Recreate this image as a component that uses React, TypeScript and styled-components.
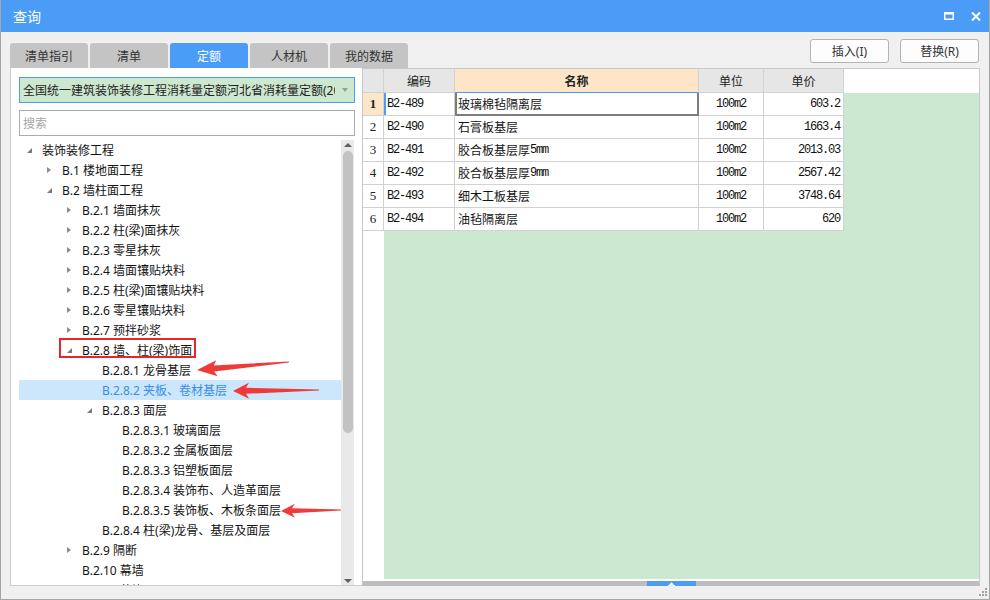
import React from "react";
import styled, { createGlobalStyle, css } from "styled-components";

const BLUE = "#4a9cf7";
const GREEN = "#cde8d0";
const PEACH = "#fde6c8";
const LINE = "#d2d2d2";
const CJK = `"Noto Sans", "Noto Sans CJK SC", sans-serif`;
const MONO = `"Liberation Mono", "Noto Sans CJK SC", monospace`;

const GlobalStyle = createGlobalStyle`
  html, body { margin: 0; padding: 0; background: #fff; }
  body { font-family: ${CJK}; font-size: 12px; color: #222; }
  * { box-sizing: border-box; }
`;

const Window = styled.div`
  position: relative;
  width: 990px;
  height: 600px;
  display: flex;
  flex-direction: column;
  background: #f0f0f0;
  border: 1px solid #a6a6a6;
  border-top: none;
  overflow: hidden;
`;

const TitleBar = styled.div`
  height: 32px;
  flex: none;
  display: flex;
  align-items: center;
  justify-content: space-between;
  padding: 0 8px 0 12px;
  background: ${BLUE};
  color: #fff;
  font-size: 14px;
`;

const TitleTools = styled.div`
  display: flex;
  align-items: center;
  gap: 17px;
`;

const Body = styled.div`
  flex: 1;
  display: flex;
  flex-direction: column;
  padding: 0 9px;
  min-height: 0;
`;

const TopRow = styled.div`
  height: 36px;
  flex: none;
  display: flex;
  justify-content: space-between;
`;

const Tabs = styled.div`
  display: flex;
  gap: 2px;
  align-self: flex-end;
`;

const Tab = styled.div<{ $active?: boolean }>`
  width: 78px;
  height: 25px;
  display: flex;
  align-items: center;
  justify-content: center;
  border-radius: 3px 3px 0 0;
  background: ${(p) => (p.$active ? BLUE : "#c4c4c4")};
  color: ${(p) => (p.$active ? "#fff" : "#333")};
  font-size: 12px;
`;

const Buttons = styled.div`
  display: flex;
  gap: 11px;
  margin: 7px 1px 0 0;
`;

const Button = styled.div`
  width: 79px;
  height: 24px;
  display: flex;
  align-items: center;
  justify-content: center;
  background: #fdfdfd;
  border: 1px solid #b4b4b4;
  border-radius: 3px;
  color: #333;
  font-size: 12px;
`;

const Content = styled.div`
  height: 518px;
  flex: none;
  display: flex;
`;

const LeftPanel = styled.div`
  width: 352px;
  flex: none;
  display: flex;
  flex-direction: column;
  background: #fff;
  border-left: 1px solid #cdcdcd;
  border-bottom: 1px solid #cdcdcd;
  padding: 9px 7px 0 8px;
`;

const Dropdown = styled.div`
  position: relative;
  height: 26px;
  flex: none;
  display: flex;
  align-items: center;
  padding: 0 19px 0 3px;
  background: ${GREEN};
  border: 1px solid ${BLUE};
  color: #222;
  white-space: nowrap;
  overflow: hidden;

  &::after {
    content: "";
    position: absolute;
    right: 6px;
    top: 10px;
    border-top: 4px solid #9a9a9a;
    border-left: 3px solid transparent;
    border-right: 3px solid transparent;
  }
`;

const DropText = styled.span`
  overflow: hidden;
  display: block;
  width: 100%;
`;

const Search = styled.div`
  height: 26px;
  flex: none;
  margin-top: 7px;
  display: flex;
  align-items: center;
  padding-left: 3px;
  border: 1px solid #ababab;
  color: #a6a6a6;
`;

const Tree = styled.div`
  flex: 1;
  min-height: 0;
  margin-top: 4px;
  display: flex;
`;

const TreeRows = styled.div`
  flex: 1;
  overflow: hidden;
  display: flex;
  flex-direction: column;
`;

const TreeRow = styled.div<{ $level: number; $selected?: boolean }>`
  position: relative;
  height: 20px;
  flex: none;
  display: flex;
  align-items: center;
  padding-left: ${(p) => 7 + p.$level * 20}px;
  white-space: nowrap;
  color: #141414;
  ${(p) =>
    p.$selected &&
    css`
      background: #cce6fb;
      color: #3b8de4;
    `}
`;

const Toggle = styled.span<{ $state?: "open" | "closed" }>`
  position: relative;
  width: 16px;
  height: 20px;
  flex: none;

  &::before {
    content: "";
    position: absolute;
    width: 0;
    height: 0;
    border-style: solid;
    ${(p) =>
      p.$state === "closed" &&
      css`
        left: 1px;
        top: 6.5px;
        border-width: 3.5px 0 3.5px 4px;
        border-color: transparent transparent transparent #8c8c8c;
      `}
    ${(p) =>
      p.$state === "open" &&
      css`
        left: 1px;
        top: 8px;
        border-width: 0 0 5px 5px;
        border-color: transparent transparent #7a7a7a transparent;
      `}
    ${(p) => !p.$state && css`display: none;`}
  }
`;

const RedBox = styled.span`
  position: absolute;
  left: 40px;
  top: -2px;
  width: 137px;
  height: 20px;
  border: 2px solid #e5262b;
`;

const VScroll = styled.div`
  width: 13px;
  flex: none;
  margin-right: 1px;
  display: flex;
  flex-direction: column;
  align-items: center;
  background: #e9e9e9;
  padding: 3px 0 2px;
`;

const ScrollArrow = styled.span<{ $down?: boolean }>`
  width: 0;
  height: 0;
  border-left: 4px solid transparent;
  border-right: 4px solid transparent;
  ${(p) =>
    p.$down
      ? css`border-top: 4px solid #606060;`
      : css`border-bottom: 4px solid #606060;`}
`;

const VThumb = styled.div`
  width: 10px;
  height: 282px;
  margin-top: 4px;
  border-radius: 5px;
  background: #c2c2c2;
`;

const Spacer = styled.div`
  flex: 1;
`;

const GridBox = styled.div`
  flex: 1;
  display: flex;
  flex-direction: column;
  border: 1px solid #c8c8c8;
  border-bottom: none;
  background: #fff;
`;

const HeaderRow = styled.div`
  height: 24px;
  flex: none;
  display: flex;
`;

const HeadCell = styled.div<{ $w: number; $active?: boolean }>`
  width: ${(p) => p.$w}px;
  flex: none;
  display: flex;
  align-items: center;
  justify-content: center;
  background: ${(p) => (p.$active ? PEACH : "#e6e6e6")};
  border-right: 1px solid ${LINE};
  border-bottom: 1px solid ${(p) => (p.$active ? BLUE : LINE)};
  font-weight: ${(p) => (p.$active ? 700 : 400)};
  color: #222;
`;

const HeadFill = styled.div`
  flex: 1;
`;

const GridBody = styled.div`
  flex: 1;
  display: flex;
  min-height: 0;
`;

const RowNumCol = styled.div`
  width: 21px;
  flex: none;
  background: #fff;
`;

const RowNum = styled.div<{ $active?: boolean }>`
  height: 23px;
  display: flex;
  align-items: center;
  justify-content: center;
  border-right: 1px solid ${LINE};
  border-bottom: 1px solid ${LINE};
  background: ${(p) => (p.$active ? PEACH : "#fff")};
  font-family: "Liberation Serif", serif;
  font-size: 13px;
  font-weight: ${(p) => (p.$active ? 700 : 400)};
`;

const DataArea = styled.div`
  flex: 1;
  background: ${GREEN};
`;

const DataRow = styled.div`
  height: 23px;
  display: flex;
`;

const monoText = css`
  font-family: ${MONO};
  font-size: 12px;
  letter-spacing: -1.2px;
  color: #111;
`;

const Cell = styled.div<{ $w: number; $align?: "left" | "center" | "right"; $mono?: boolean; $current?: boolean; $focus?: boolean }>`
  width: ${(p) => p.$w}px;
  flex: none;
  display: flex;
  align-items: center;
  justify-content: ${(p) => (p.$align === "right" ? "flex-end" : p.$align === "center" ? "center" : "flex-start")};
  padding: 0 3px 0 3px;
  background: #fff;
  border-right: 1px solid ${LINE};
  border-bottom: 1px solid ${LINE};
  white-space: nowrap;
  color: #141414;
  ${(p) => p.$mono && monoText}
  ${(p) => p.$current && css`box-shadow: inset 2px 0 ${BLUE};`}
  ${(p) =>
    p.$focus &&
    css`
      box-shadow: inset 2px 0 #7d7d7d, inset -1px 0 #7d7d7d, inset 0 -1px #7d7d7d;
      border-right-color: #7d7d7d;
      border-bottom-color: #7d7d7d;
    `}
`;

const Mono = styled.span`
  ${monoText}
`;

const GapStrip = styled.div`
  height: 2px;
  flex: none;
  background: #fff;
`;

const HBar = styled.div`
  height: 5px;
  flex: none;
  display: flex;
  justify-content: center;
  background: #bdbdbd;
`;

const HThumb = styled.div`
  width: 49px;
  height: 5px;
  display: flex;
  justify-content: center;
  align-items: flex-end;
  background: ${BLUE};
`;

const Footer = styled.div`
  height: 13px;
  flex: none;
  display: flex;
  justify-content: flex-end;
  align-items: center;
  padding-right: 1px;
`;

const Overlay = styled.svg`
  position: absolute;
  left: 0;
  top: 0;
  pointer-events: none;
`;

type Node = { label: string; level: number; toggle?: "open" | "closed"; selected?: boolean; boxed?: boolean };

const tree: Node[] = [
  { label: "装饰装修工程", level: 0, toggle: "open" },
  { label: "B.1 楼地面工程", level: 1, toggle: "closed" },
  { label: "B.2 墙柱面工程", level: 1, toggle: "open" },
  { label: "B.2.1 墙面抹灰", level: 2, toggle: "closed" },
  { label: "B.2.2 柱(梁)面抹灰", level: 2, toggle: "closed" },
  { label: "B.2.3 零星抹灰", level: 2, toggle: "closed" },
  { label: "B.2.4 墙面镶贴块料", level: 2, toggle: "closed" },
  { label: "B.2.5 柱(梁)面镶贴块料", level: 2, toggle: "closed" },
  { label: "B.2.6 零星镶贴块料", level: 2, toggle: "closed" },
  { label: "B.2.7 预拌砂浆", level: 2, toggle: "closed" },
  { label: "B.2.8 墙、柱(梁)饰面", level: 2, toggle: "open", boxed: true },
  { label: "B.2.8.1 龙骨基层", level: 3 },
  { label: "B.2.8.2 夹板、卷材基层", level: 3, selected: true },
  { label: "B.2.8.3 面层", level: 3, toggle: "open" },
  { label: "B.2.8.3.1 玻璃面层", level: 4 },
  { label: "B.2.8.3.2 金属板面层", level: 4 },
  { label: "B.2.8.3.3 铝塑板面层", level: 4 },
  { label: "B.2.8.3.4 装饰布、人造革面层", level: 4 },
  { label: "B.2.8.3.5 装饰板、木板条面层", level: 4 },
  { label: "B.2.8.4 柱(梁)龙骨、基层及面层", level: 3 },
  { label: "B.2.9 隔断", level: 2, toggle: "closed" },
  { label: "B.2.10 幕墙", level: 2 },
  { label: "B.2.11 幕饰", level: 2 },
];

const rows = [
  { code: "B2-489", name: "玻璃棉毡隔离层", unit: "100m2", price: "603.2" },
  { code: "B2-490", name: "石膏板基层", unit: "100m2", price: "1663.4" },
  { code: "B2-491", name: "胶合板基层厚", suffix: "5mm", unit: "100m2", price: "2013.03" },
  { code: "B2-492", name: "胶合板基层厚", suffix: "9mm", unit: "100m2", price: "2567.42" },
  { code: "B2-493", name: "细木工板基层", unit: "100m2", price: "3748.64" },
  { code: "B2-494", name: "油毡隔离层", unit: "100m2", price: "620" },
];

const COLS = { code: 71, name: 244, unit: 65, price: 80 };

// arrow polygon from tip to tail, barbs swept back
const arrow = (tx: number, ty: number, ex: number, ey: number, head: number, half: number, neck: number) => {
  const dx = ex - tx;
  const dy = ey - ty;
  const len = Math.hypot(dx, dy);
  const ux = dx / len;
  const uy = dy / len;
  const nx = -uy;
  const ny = ux;
  const p = (a: number, b: number) => `${(tx + ux * a + nx * b).toFixed(1)},${(ty + uy * a + ny * b).toFixed(1)}`;
  return [p(0, 0), p(head, half), p(head - 3, neck), p(len, 0.6), p(len, -0.6), p(head - 3, -neck), p(head, -half)].join(" ");
};

const App = () => {
  return (
    <>
      <GlobalStyle />
      <Window>
        <TitleBar>
          <span>查询</span>
          <TitleTools>
            <svg width="10" height="8" viewBox="0 0 10 8">
              <rect x="0.75" y="1.25" width="8.5" height="6" fill="none" stroke="#fff" strokeWidth="1.5" />
              <rect x="0" y="0" width="10" height="2.5" fill="#fff" />
            </svg>
            <svg width="10" height="9" viewBox="0 0 10 9">
              <path d="M1 0.5 L9 8.5 M9 0.5 L1 8.5" stroke="#fff" strokeWidth="2" />
            </svg>
          </TitleTools>
        </TitleBar>
        <Body>
          <TopRow>
            <Tabs>
              <Tab>清单指引</Tab>
              <Tab>清单</Tab>
              <Tab $active>定额</Tab>
              <Tab>人材机</Tab>
              <Tab>我的数据</Tab>
            </Tabs>
            <Buttons>
              <Button>插入(I)</Button>
              <Button>替换(R)</Button>
            </Buttons>
          </TopRow>
          <Content>
            <LeftPanel>
              <Dropdown>
                <DropText>全国统一建筑装饰装修工程消耗量定额河北省消耗量定额(2012)</DropText>
              </Dropdown>
              <Search>搜索</Search>
              <Tree>
                <TreeRows>
                  {tree.map((n) => (
                    <TreeRow key={n.label} $level={n.level} $selected={n.selected}>
                      <Toggle $state={n.toggle} />
                      <span>{n.label}</span>
                      {n.boxed && <RedBox />}
                    </TreeRow>
                  ))}
                </TreeRows>
                <VScroll>
                  <ScrollArrow />
                  <VThumb />
                  <Spacer />
                  <ScrollArrow $down />
                </VScroll>
              </Tree>
            </LeftPanel>
            <GridBox>
              <HeaderRow>
                <HeadCell $w={21} />
                <HeadCell $w={COLS.code}>编码</HeadCell>
                <HeadCell $w={COLS.name} $active>
                  名称
                </HeadCell>
                <HeadCell $w={COLS.unit}>单位</HeadCell>
                <HeadCell $w={COLS.price}>单价</HeadCell>
                <HeadFill />
              </HeaderRow>
              <GridBody>
                <RowNumCol>
                  {rows.map((r, i) => (
                    <RowNum key={r.code} $active={i === 0}>
                      {i + 1}
                    </RowNum>
                  ))}
                </RowNumCol>
                <DataArea>
                  {rows.map((r, i) => (
                    <DataRow key={r.code}>
                      <Cell $w={COLS.code} $mono $current={i === 0}>
                        {r.code}
                      </Cell>
                      <Cell $w={COLS.name} $focus={i === 0}>
                        {r.name}
                        {r.suffix && <Mono>{r.suffix}</Mono>}
                      </Cell>
                      <Cell $w={COLS.unit} $align="center" $mono>
                        {r.unit}
                      </Cell>
                      <Cell $w={COLS.price} $align="right" $mono>
                        {r.price}
                      </Cell>
                    </DataRow>
                  ))}
                </DataArea>
              </GridBody>
              <GapStrip />
              <HBar>
                <HThumb>
                  <svg width="7" height="4" viewBox="0 0 7 4">
                    <path d="M3.5 0 L6 3 L1 3 Z M0 3 H7 V4 H0 Z" fill="#fff" />
                  </svg>
                </HThumb>
              </HBar>
            </GridBox>
          </Content>
        </Body>
        <Footer>
          <svg width="10" height="9" viewBox="0 0 10 9">
            <g fill="#a3a3a3">
              <rect x="7" y="0" width="2" height="2" />
              <rect x="4" y="3" width="2" height="2" />
              <rect x="7" y="3" width="2" height="2" />
              <rect x="1" y="6" width="2" height="2" />
              <rect x="4" y="6" width="2" height="2" />
              <rect x="7" y="6" width="2" height="2" />
            </g>
          </svg>
        </Footer>
        <Overlay width="990" height="600" viewBox="0 0 990 600">
          <g fill="#ef3a3a">
            <polygon points={arrow(196, 370, 288, 362, 20, 8, 3)} />
            <polygon points={arrow(232, 391, 318, 390, 16, 8, 3)} />
            <polygon points={arrow(280, 511, 340, 510, 14, 7, 2.5)} />
          </g>
        </Overlay>
      </Window>
    </>
  );
};

export default App;
